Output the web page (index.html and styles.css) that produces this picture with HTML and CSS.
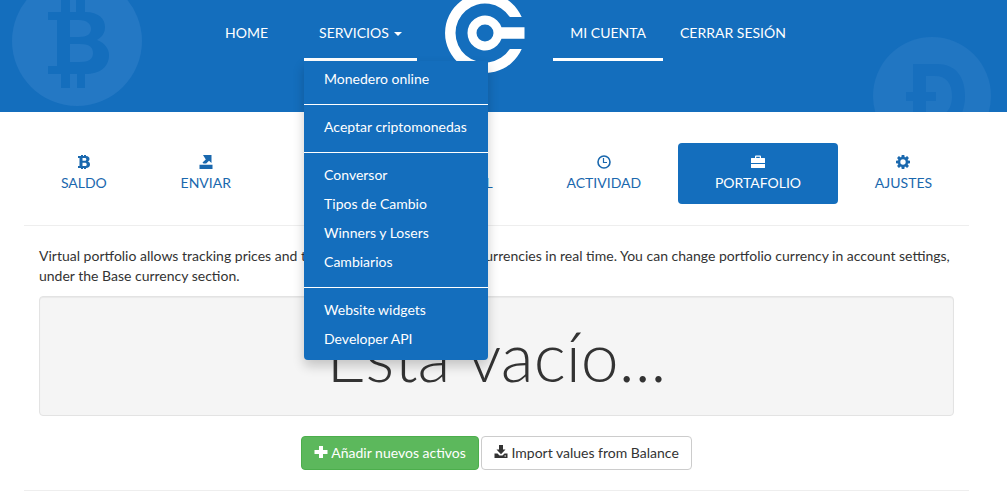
FILE: index.html
```html
<!DOCTYPE html>
<html lang="es">
<head>
    <meta charset="UTF-8">
    <meta name="viewport" content="width=device-width, initial-scale=1.0">
    <title>Portafolio</title>
    <link rel="stylesheet" href="styles.css">
</head>
<body>
    <header class="header">
        <div class="coins" aria-hidden="true">
            <svg class="coin coin-btc" viewBox="0 0 130 130">
                <circle cx="65" cy="65" r="65" fill="#2478c4"/>
                <path fill="#146ebd" fill-rule="evenodd" d="M36 36h13v-14h9v14h6v-14h9v14c14 0 20 7 20 15 0 6-3 10-8 13 8 3 12 9 12 15 0 12-9 19-24 19v14h-8v-14h-7v14h-9v-14H36v-8h9V44h-9zM58 44v17h9c8 0 12-3 12-8s-4-9-12-9zM58 68v18h10c9 0 13-3 13-9s-4-9-13-9z"/>
            </svg>
            <svg class="coin coin-doge" viewBox="0 0 118 118">
                <circle cx="59" cy="59" r="59" fill="#2176c2"/>
                <path fill="#176fbe" fill-rule="evenodd" d="M40 27h24c18 0 28 12 28 32S82 91 64 91H40V64h-7v-9h7zM53 39v16h10v9H53v15h9c11 0 17-7 17-20s-6-20-17-20z"/>
            </svg>
        </div>
        <nav class="menu">
            <a class="menu-link menu-home" href="#">HOME</a>
            <div class="dropdown">
                <a class="menu-link active" href="#">SERVICIOS <span class="caret"></span></a>
                <ul class="dropdown-menu">
                    <li><a href="#">Monedero online</a></li>
                    <li class="divider"></li>
                    <li><a href="#">Aceptar criptomonedas</a></li>
                    <li class="divider"></li>
                    <li><a href="#">Conversor</a></li>
                    <li><a href="#">Tipos de Cambio</a></li>
                    <li><a href="#">Winners y Losers</a></li>
                    <li><a href="#">Cambiarios</a></li>
                    <li class="divider"></li>
                    <li><a href="#">Website widgets</a></li>
                    <li><a href="#">Developer API</a></li>
                </ul>
            </div>
            <a class="logo" href="#" aria-label="Inicio">
                <svg width="80" height="73" viewBox="-40 -33 80 73" fill="#fff">
                    <path d="M36.7 -16A40 40 0 1 0 36.7 16H24.8A29.5 29.5 0 1 1 24.8 -16Z"/>
                    <path fill-rule="evenodd" d="M16.5 -5.8H39.5V5.8H16.5A17.5 17.5 0 1 1 16.5 -5.8ZM-8.5 0A8.5 8.5 0 1 0 8.5 0A8.5 8.5 0 1 0 -8.5 0Z"/>
                </svg>
            </a>
            <a class="menu-link menu-account active" href="#">MI CUENTA</a>
            <a class="menu-link menu-account" href="#">CERRAR SESIÓN</a>
        </nav>
    </header>

    <main class="container">
        <nav class="tabs">
            <a class="tab" href="#">
                <svg class="icon" viewBox="0 0 14 14"><path fill-rule="evenodd" d="M1 1h3V0h2v1h1V0h2v1c2.500.2 3.500 1.300 3.500 3 0 1.200-.6 2-1.500 2.500 1.300.5 2 1.400 2 2.900 0 2.200-1.500 3.500-4 3.600v1H7v-1H6v1H4v-1H1v-2h1.500V3H1zM5.500 3v2.800h2c1.200 0 1.800-.5 1.800-1.400S8.700 3 7.500 3zM5.500 7.800V11h2.200c1.400 0 2-.6 2-1.600s-.6-1.600-2-1.600z"/></svg>
                SALDO
            </a>
            <a class="tab" href="#">
                <svg class="icon" viewBox="0 0 14 14"><path d="M4 0h8.500v8L10 5.800 7.200 8.600H4.500L3.500 7.500 6.800 4.500zM.5 9.800h13V14H.5z"/></svg>
                ENVIAR
            </a>
            <a class="tab" href="#">
                <svg class="icon" viewBox="0 0 14 14"><path d="M5 0h4v5h3L7 9 2 5h3zM1 10h12v4H1z"/></svg>
                RECIBIR
            </a>
            <a class="tab" href="#">
                <svg class="icon" viewBox="0 0 14 14"><path d="M7 0a3.500 3.500 0 0 1 3 5.500L9 8l4 2v4H1v-4l4-2-1-2.500A3.500 3.500 0 0 1 7 0z"/></svg>
                GENERAL
            </a>
            <a class="tab" href="#">
                <svg class="icon icon-line" viewBox="0 0 14 14"><circle cx="7" cy="7" r="6" stroke-width="1.600"/><path d="M6.500 3v4.500H10" stroke-width="1.200"/></svg>
                ACTIVIDAD
            </a>
            <a class="tab selected" href="#">
                <svg class="icon" viewBox="0 0 14 14"><path fill-rule="evenodd" d="M4 3V1.500Q4 .5 5 .5h4q1 0 1 1V3h3.500q.5 0 .5.500V8H0V3.500Q0 3 .5 3zM5.200 3h3.600V1.700H5.200zM0 9h14v3.500q0 .5-.5.500H.5Q0 13 0 12.500z"/></svg>
                PORTAFOLIO
            </a>
            <a class="tab" href="#">
                <svg class="icon" viewBox="-7 -7 14 14"><mask id="hub"><path fill="#fff" d="M-7-7H7V7H-7z"/><circle r="2.700" fill="#000"/></mask><g mask="url(#hub)"><circle r="5"/><path d="M-1.300-7h2.600l.5 3h-3.600zM-1.300 7h2.600l.5-3h-3.600zM-7-1.300v2.600l3 .5v-3.600zM7-1.300v2.600l-3 .5v-3.600zM-5.900-4.100l1.800-1.800 2.500 1.800-2.500 2.500zM5.900-4.100L4.100-5.900 1.600-4.100l2.500 2.500zM-5.900 4.100l1.800 1.800 2.500-1.800-2.500-2.500zM5.900 4.100L4.100 5.900 1.600 4.100l2.500-2.500z"/></g></svg>
                AJUSTES
            </a>
        </nav>
        <hr>
        <section class="portfolio">
            <p>Virtual portfolio allows tracking prices and the total value of your cryptocurrencies in real time. You can change portfolio currency in account settings, under the Base currency section.</p>
            <div class="well">
                <h1>Está vacío...</h1>
            </div>
            <div class="actions">
                <button type="button" class="btn btn-success">
                    <svg class="icon" viewBox="0 0 14 14"><path d="M5 1h4v4h4.500v4H9v4H5V9H.5V5H5z"/></svg>
                    Añadir nuevos activos
                </button>
                <button type="button" class="btn btn-default">
                    <svg class="icon" viewBox="0 0 14 14"><path fill-rule="evenodd" d="M5 0h4v4.500h2.500L7 9.200 2.500 4.500H5zM.5 8.500h3L5.500 10.500h3l2-2h3V13H.5zM10.500 10.500v1h1.500v-1z"/></svg>
                    Import values from Balance
                </button>
            </div>
        </section>
        <hr>
    </main>
</body>
</html>
```

FILE: styles.css
```css
* {
  box-sizing: border-box;
}
body {
  margin: 0;
  font-family: Lato, "Open Sans", sans-serif;
  font-size: 14px;
  line-height: 20px;
  color: #333;
  background-color: #fff;
}
a {
  color: #1a68ae;
  text-decoration: none;
}
.header {
  position: relative;
  height: 112px;
  background-color: #146ebd;
}
.coins {
  position: absolute;
  inset: 0;
  overflow: hidden;
}
.coin {
  position: absolute;
}
.coin-btc {
  left: 12px;
  top: -24px;
  width: 130px;
}
.coin-doge {
  right: 16px;
  top: 37px;
  width: 118px;
}
.menu {
  position: relative;
  z-index: 1;
  display: flex;
  justify-content: center;
  align-items: flex-start;
  padding-left: 6px;
}
.menu-link {
  display: block;
  padding: 23px 15px 15px;
  border-bottom: 3px solid transparent;
  color: #fff;
}
.menu-link.active {
  border-color: #fff;
}
.menu-home {
  margin-right: 21px;
}
.menu-account {
  padding-left: 17px;
  padding-right: 17px;
}
.caret {
  display: inline-block;
  margin-left: 2px;
  vertical-align: middle;
  border-top: 4px solid;
  border-left: 4px solid transparent;
  border-right: 4px solid transparent;
}
.logo {
  margin: 0 28px;
}
.logo svg {
  display: block;
}
.dropdown {
  position: relative;
}
.dropdown-menu {
  position: absolute;
  top: 100%;
  left: 0;
  z-index: 10;
  min-width: 184px;
  margin: 0;
  padding: 5px 0;
  list-style: none;
  white-space: nowrap;
  background-color: #146ebd;
  border-radius: 0 0 4px 4px;
  box-shadow: 0 6px 12px rgba(0, 0, 0, 0.2);
}
.dropdown-menu a {
  display: block;
  padding: 3px 20px 6px;
  color: #fff;
}
.dropdown-menu .divider {
  height: 1px;
  margin: 9px 0;
  background-color: #fff;
}
.container {
  padding: 31px 38px 0 24px;
}
.tabs {
  display: flex;
  padding-bottom: 1px;
}
.tab {
  flex: 1 1 auto;
  padding: 10px 15px 11px;
  border-radius: 4px;
  text-align: center;
}
.tab .icon {
  display: block;
  margin: 2px auto 4px;
}
.tab.selected {
  color: #fff;
  background-color: #146ebd;
}
.icon {
  width: 14px;
  height: 14px;
  fill: currentColor;
}
.icon-line {
  fill: none;
  stroke: currentColor;
}
hr {
  margin: 20px 0;
  border: 0;
  border-top: 1px solid #eee;
}
.portfolio {
  padding: 0 15px;
}
p {
  margin: 0 0 10px;
}
.well {
  padding: 19px;
  border: 1px solid #e3e3e3;
  border-radius: 4px;
  background-color: #f5f5f5;
  box-shadow: inset 0 1px 1px rgba(0, 0, 0, 0.05);
  text-align: center;
}
h1 {
  margin: 0;
  font-size: 68px;
  font-weight: 300;
  line-height: 80px;
}
.actions {
  display: flex;
  justify-content: center;
  gap: 2px;
  margin-top: 20px;
}
.btn {
  padding: 6px 12px;
  border: 1px solid #ccc;
  border-radius: 4px;
  font: inherit;
  color: #333;
  background-color: #fff;
  cursor: pointer;
}
.btn .icon {
  vertical-align: -1px;
}
.btn-success {
  color: #fff;
  background-color: #5cb85c;
  border-color: #4cae4c;
}
```
